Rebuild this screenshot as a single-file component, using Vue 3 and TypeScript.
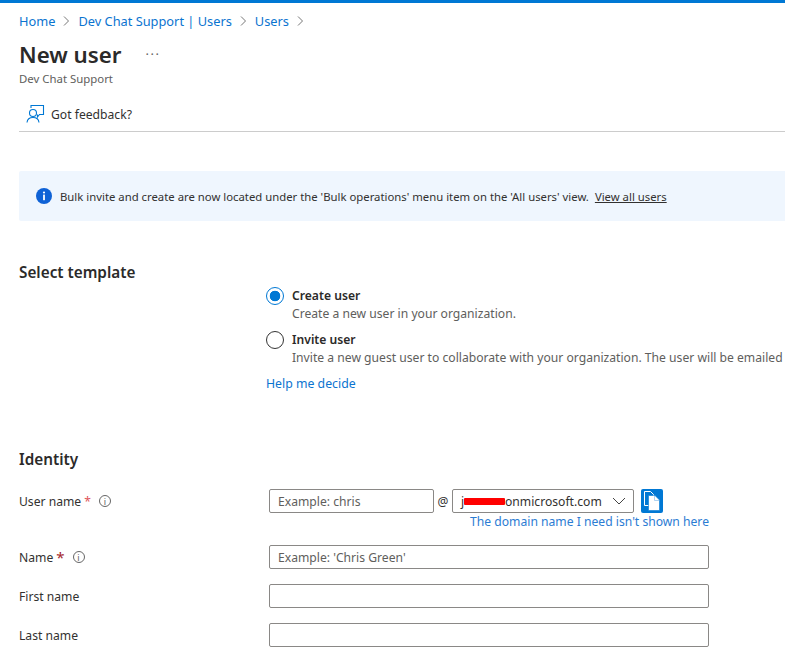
<script setup lang="ts">
const crumbs: string[] = ['Home', 'Dev Chat Support | Users', 'Users']
</script>

<template>
  <div class="page">
    <div class="topbar"></div>
    <nav class="crumbs">
      <template v-for="c in crumbs" :key="c">
        <a class="link">{{ c }}</a>
        <svg class="chev" width="7" height="12" viewBox="0 0 7 12"><path d="M1 1.5 5.5 6 1 10.5" fill="none" stroke="#777" stroke-width="1"/></svg>
      </template>
    </nav>
    <div class="title-row">
      <h1>New user</h1>
      <span class="more">···</span>
    </div>
    <div class="subtitle">Dev Chat Support</div>
    <div class="toolbar">
      <svg width="20" height="20" viewBox="0 0 20 20" fill="none" stroke="#0078d4" stroke-width="1.1">
        <circle cx="8" cy="9" r="3.5"/>
        <path d="M2 18.5c.3-3 2.8-5 6-5s5.700 2 6 5"/>
        <path d="M6 4V1.500h12.500v9h-4l-2 2.500v-2.500"/>
      </svg>
      <span>Got feedback?</span>
    </div>
    <div class="banner">
      <svg width="16" height="16" viewBox="0 0 16 16"><circle cx="8" cy="8" r="8" fill="#0f62d6"/><rect x="7.100" y="6.600" width="1.800" height="5.600" fill="#fff"/><circle cx="8" cy="4.500" r="1.100" fill="#fff"/></svg>
      <span class="banner-text">Bulk invite and create are now located under the 'Bulk operations' menu item on the 'All users' view.</span>
      <a class="banner-link">View all users</a>
    </div>

    <section class="template">
      <h2>Select template</h2>
      <div class="options">
        <div class="option">
          <span class="radio on"></span>
          <div>
            <div class="opt-title">Create user</div>
            <div class="opt-desc">Create a new user in your organization.</div>
          </div>
        </div>
        <div class="option">
          <span class="radio"></span>
          <div>
            <div class="opt-title">Invite user</div>
            <div class="opt-desc nowrap">Invite a new guest user to collaborate with your organization. The user will be emailed</div>
          </div>
        </div>
        <a class="link help">Help me decide</a>
      </div>
    </section>

    <h2 class="identity">Identity</h2>
    <div class="row first">
      <label>User name <span class="req">*</span><span class="info">i</span></label>
      <div class="ctrl">
        <div class="userline">
          <div class="input short">Example: chris</div>
          <span class="at">@</span>
          <div class="input domain">
            <span class="domain-text"><span class="j">j</span><span class="redact"></span>onmicrosoft.com</span>
            <svg width="14" height="8" viewBox="0 0 14 8"><path d="M1 1l6 6 6-6" fill="none" stroke="#444" stroke-width="1"/></svg>
          </div>
          <button class="copy">
            <svg width="16" height="20" viewBox="0 0 16 20">
              <path d="M.5.5h6l3 3v11h-9z" fill="none" stroke="#fff"/>
              <path d="M4.500 4.500h6.500l4.500 4.500v10.500h-11z" fill="#fff" stroke="#0078d4" stroke-width=".6"/>
              <path d="M10.500 4.800v4.700h4.700" fill="none" stroke="#9cc8ec" stroke-width=".8"/>
            </svg>
          </button>
        </div>
        <a class="link domain-link">The domain name I need isn't shown here</a>
      </div>
    </div>
    <div class="row name">
      <label>Name <span class="req dark">*</span><span class="info">i</span></label>
      <div class="input wide">Example: 'Chris Green'</div>
    </div>
    <div class="row">
      <label>First name</label>
      <div class="input wide"></div>
    </div>
    <div class="row">
      <label>Last name</label>
      <div class="input wide"></div>
    </div>
  </div>
</template>

<style>
html, body { margin: 0; background: #fff; }
</style>

<style scoped>
.page {
  width: 785px;
  height: 668px;
  overflow: hidden;
  font-family: "Noto Sans", "Open Sans", sans-serif;
  font-size: 12.15px;
  color: #323130;
  background: #fff;
  box-sizing: border-box;
}
.topbar { height: 3px; background: #0078d4; }
.link { color: #0b74d0; }
.crumbs {
  display: flex;
  align-items: center;
  gap: 8px;
  margin: 9px 0 0 19px;
  height: 18px;
  font-size: 12.8px;
}
.title-row {
  display: flex;
  align-items: center;
  margin: 10px 0 0 19px;
  height: 30px;
}
h1 { margin: 0; font-size: 22.3px; font-weight: 600; line-height: 30px; color: #2b2a29; }
.more { margin-left: 24px; font-size: 13px; color: #666; letter-spacing: 1.5px; position: relative; top: -1px; }
.subtitle { margin: 1px 0 0 19px; font-size: 11.4px; line-height: 16px; color: #605e5c; }
.toolbar {
  display: flex;
  align-items: center;
  gap: 6px;
  height: 40px;
  margin: 5px 0 0 19px;
  padding: 5px 0 0 6px;
  border-bottom: 1px solid #ccc;
  box-sizing: border-box;
}
.banner {
  display: flex;
  align-items: center;
  margin: 39px 0 0 19px;
  height: 50px;
  width: 800px;
  box-sizing: border-box;
  padding-left: 17px;
  background: #eff6fe;
  border-radius: 2px;
  font-size: 11.34px;
}
.banner-text { margin-left: 8px; }
.banner-link { margin-left: 6px; color: #323130; text-decoration: underline; }
.template { display: flex; margin: 40px 0 0 19px; }
h2 { margin: 0; font-size: 15.3px; font-weight: 600; line-height: 22px; color: #2b2a29; }
.template h2 { width: 247px; flex: none; }
.options { display: flex; flex-direction: column; margin-top: 14px; padding-top: 12px; min-width: 0; flex: 1; }
.option { display: flex; gap: 8px; margin-bottom: 8px; }
.option > div { min-width: 0; flex: 1; }
.radio {
  width: 18px; height: 18px; flex: none; box-sizing: border-box;
  border: 1px solid #333; border-radius: 50%; background: #fff;
}
.radio.on { border-color: #0078d4; background: radial-gradient(circle, #0078d4 0 5px, #fff 5.6px); }
.opt-title { font-weight: 600; line-height: 18px; color: #2b2a29; }
.opt-desc { line-height: 18px; color: #605e5c; }
.nowrap { white-space: nowrap; }
.help { line-height: 18px; font-size: 12.3px; }
.identity { margin: 55px 0 0 19px; }
.row { display: flex; align-items: center; margin: 15px 0 0 19px; }
.row label { width: 250px; flex: none; display: flex; align-items: center; color: #323130; }
.row.first { align-items: flex-start; margin-top: 19px; }
.row.first label { height: 24px; }
.row.name { margin-top: 14px; }
.req { color: #e0555c; margin-left: 3px; }
.req.dark { color: #a4262c; font-size: 15px; }
.info {
  display: inline-flex; align-items: center; justify-content: center;
  width: 12px; height: 12px; margin-left: 8px; box-sizing: border-box;
  border: 1px solid #666; border-radius: 50%; font-size: 9px; line-height: 1; color: #666;
}
.ctrl { display: flex; flex-direction: column; width: 440px; }
.input {
  box-sizing: border-box; height: 24px; display: flex; align-items: center;
  padding: 0 8px; border: 1px solid #8a8886; border-radius: 2px; color: #605e5c; background: #fff;
}
.wide { width: 440px; }
.short { width: 165px; }
.userline { display: flex; align-items: center; }
.at { width: 18px; text-align: center; }
.domain { width: 182px; justify-content: space-between; color: #323130; padding-right: 7px; }
.domain-text { display: flex; align-items: center; }
.j { width: 3px; }
.redact { width: 41px; height: 7px; background: #f00; border-radius: 1px; }
.copy {
  width: 22px; height: 24px; margin-left: 7px; padding: 0; border: 0; border-radius: 2px;
  background: #0078d4; display: flex; align-items: center; justify-content: center;
}
.domain-link { align-self: flex-end; line-height: 18px; white-space: nowrap; color: #2b7cd3; }
</style>
